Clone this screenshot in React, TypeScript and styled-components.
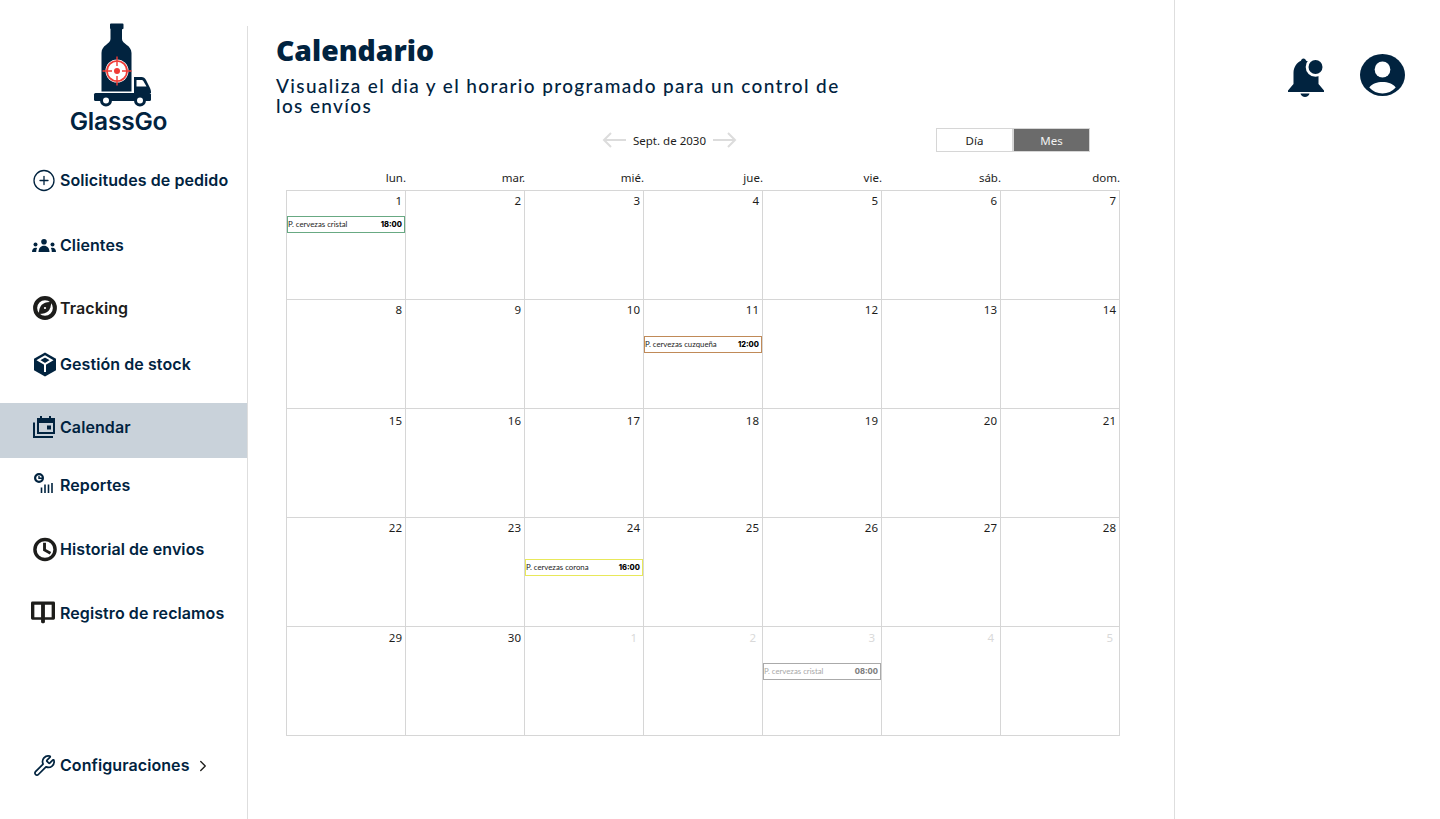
import { ReactNode } from 'react';
import styled, { createGlobalStyle } from 'styled-components';
import { ChevronRight, CirclePlus, Wrench } from 'lucide-react';

const NAVY = '#01233f';
const INK = '#1d1d1b';
const LINE = '#d6d6d6';

const GlobalStyle = createGlobalStyle`
  html, body { margin: 0; padding: 0; background: #fff; }
  body { font-family: 'Inter', 'Liberation Sans', sans-serif; color: ${NAVY}; overflow: hidden; }
  * { box-sizing: border-box; }
`;

const LogoSvg = styled.svg`
  flex: none;
  margin-left: 8px;
`;

function LogoMark() {
  return (
    <LogoSvg width="60" height="84" viewBox="0 0 60 84">
      <path
        d="M17 1.500a1 1 0 0 1 1-1h11.500a1 1 0 0 1 1 1v3.500a1 1 0 0 1-1.500 1v10c0 5 9.500 6 9.500 14v38.500h-30v-38.500c0-8 9-9 9-14v-10a1 1 0 0 1-.5-1z"
        fill={NAVY}
      />
      <path d="M41 54h7.500c2 0 3.500 1 4.500 3l4 8c.6 1.200 1 2.500 1 4v1h-17z" fill={NAVY} />
      <path d="M43.500 57v6.500h10l-3-5.200c-.5-.9-1.300-1.300-2.300-1.300z" fill="#fff" />
      <rect x="1" y="70" width="57" height="8" rx="1.500" fill={NAVY} />
      <g fill="#fff" stroke={NAVY} strokeWidth="3">
        <circle cx="13" cy="77.500" r="4.500" />
        <circle cx="47" cy="77.500" r="4.500" />
      </g>
      <circle cx="24" cy="48" r="11.500" fill="#fff" />
      <circle cx="24" cy="48" r="10" fill="none" stroke="#ef3b36" strokeWidth="1.700" />
      <circle cx="24" cy="48" r="3" fill="#ef3b36" />
      <path d="M24 33.500v9.500M24 53v9.500M9.500 48h9.500M29 48h9.500" stroke="#ef3b36" strokeWidth="1.400" />
    </LogoSvg>
  );
}

function PeopleIcon() {
  return (
    <svg width="24" height="13" viewBox="0 0 24 13">
      <g fill={NAVY}>
        <circle cx="12" cy="2.800" r="2.800" />
        <path d="M6.500 13c0-4 2.300-6.300 5.500-6.300s5.500 2.300 5.500 6.300z" />
        <circle cx="3.500" cy="5.500" r="2" />
        <path d="M0 13c0-2.500 1.300-4.300 3.500-4.300 .6 0 1.200.1 1.600.4-.6 1.100-.9 2.400-.9 3.900z" />
        <circle cx="20.500" cy="5.500" r="2" />
        <path d="M24 13c0-2.500-1.300-4.300-3.500-4.300-.6 0-1.200.1-1.600.4 .6 1.100.9 2.400.9 3.900z" />
      </g>
    </svg>
  );
}

function CompassIcon() {
  return (
    <svg width="26" height="26" viewBox="0 0 26 26">
      <circle cx="13" cy="13" r="10.700" fill="#fff" stroke={INK} strokeWidth="4.400" />
      <path d="M19.500 6.500c.4 4.500-1 7.500-2.800 9.700-2.200 1.900-5.500 3.300-10.200 3.300-.3-4.700 1.100-7.800 3-10 2.300-2.100 5.300-3.300 10-3z" fill={INK} />
      <circle cx="13" cy="13" r="1.200" fill="#fff" />
    </svg>
  );
}

function CubeIcon() {
  return (
    <svg width="24" height="25" viewBox="0 0 24 25">
      <path d="M12 .5l11 6.300v11.400l-11 6.300-11-6.300V6.800z" fill={NAVY} />
      <path d="M5.500 8.200l6.500-3.700 6.500 3.700-6.500 3.800zM12 12v8" fill="none" stroke="#fff" strokeWidth="2" />
    </svg>
  );
}

function StackedCalendarIcon() {
  return (
    <svg width="24" height="24" viewBox="0 0 24 24">
      <path d="M1 7.500v14.500h19" fill="none" stroke={NAVY} strokeWidth="2" />
      <path d="M7 1h2v2h7v-2h2v2h4v16h-18v-16h3z" fill={NAVY} />
      <rect x="6" y="8" width="14" height="9" fill="#c9d2da" />
      <rect x="14" y="10.500" width="4" height="4" fill={NAVY} />
    </svg>
  );
}

function ReportsIcon() {
  return (
    <svg width="20" height="24" viewBox="0 0 20 24">
      <circle cx="5" cy="5" r="3.900" fill="none" stroke={NAVY} strokeWidth="2.200" />
      <path d="M5 3v2.200h3" fill="none" stroke={NAVY} strokeWidth="1.400" />
      <path d="M7.500 14.500v5.500M11 11.500v8.500M14.500 11.500v8.500M18 10v10" fill="none" stroke={NAVY} strokeWidth="1.600" />
    </svg>
  );
}

function ClockIcon() {
  return (
    <svg width="25" height="25" viewBox="0 0 25 25">
      <circle cx="12.500" cy="12.500" r="10.500" fill="#fff" stroke={INK} strokeWidth="3.600" />
      <path d="M12 5.500v7.500l6.200 3.500" fill="none" stroke={INK} strokeWidth="3" />
    </svg>
  );
}

function BookIcon() {
  return (
    <svg width="25" height="24" viewBox="0 0 25 24">
      <path d="M1.500 0h22a1.500 1.500 0 0 1 1.500 1.500v16a1.500 1.500 0 0 1-1.500 1.500h-9v3l-2 1-2-1v-3h-9a1.500 1.500 0 0 1-1.500-1.500v-16a1.500 1.500 0 0 1 1.500-1.500z" fill={INK} />
      <path d="M3.500 3.500h7v13h-7zM14.500 3.500h7v13h-7z" fill="#fff" />
    </svg>
  );
}

function ArrowIcon({ flip }: { flip?: boolean }) {
  return (
    <svg width="25" height="16" viewBox="0 0 25 16" style={flip ? { transform: 'scaleX(-1)' } : undefined}>
      <path d="M24 8H2M9 1L2 8l7 7" fill="none" stroke="#dcdcdc" strokeWidth="2" />
    </svg>
  );
}

function BellIcon() {
  return (
    <svg width="38" height="40" viewBox="0 0 38 40">
      <path
        d="M15.500.5c1.400 0 2.400 1 2.600 2.300C25 4.500 30.500 10 30.500 18v8l5.500 6.500V34H0v-1.500l5.500-6.500V15C5.500 9 9 4.500 13 2.800c.2-1.300 1.100-2.300 2.500-2.300z"
        fill={NAVY}
      />
      <circle cx="27.500" cy="9" r="9.800" fill="#fff" />
      <circle cx="27.500" cy="9" r="7" fill={NAVY} />
      <path d="M12.500 35.500h9c-.5 2-2.400 3.500-4.500 3.500s-4-1.500-4.500-3.500z" fill={NAVY} />
    </svg>
  );
}

function UserIcon() {
  return (
    <svg width="45" height="42" viewBox="0 0 46 42" preserveAspectRatio="none">
      <ellipse cx="23" cy="21" rx="23" ry="21" fill={NAVY} />
      <circle cx="23" cy="15.500" r="8" fill="#fff" />
      <path d="M9.500 33.500c3-4 8-5.500 13.500-5.500s10.500 1.500 13.500 5.500c-3.500 3.800-8.200 6-13.500 6s-10-2.200-13.500-6z" fill="#fff" />
    </svg>
  );
}

const Page = styled.div`
  display: flex;
  width: 1440px;
  height: 819px;
`;

const Sidebar = styled.aside`
  display: flex;
  flex-direction: column;
  flex: none;
  width: 247px;
  padding-bottom: 26px;
`;

const SideRule = styled.div`
  flex: none;
  width: 1px;
  margin-top: 26px;
  background: #dedede;
`;

const Brand = styled.div`
  display: flex;
  flex-direction: column;
  align-items: center;
  height: 152px;
  padding: 23px 10px 0 0;
`;

const BrandName = styled.div`
  margin-top: -1px;
  font-size: 24.5px;
  font-weight: 600;
  line-height: 30px;
  letter-spacing: -0.2px;
`;

const NavItem = styled.div<{ $gap?: number; $active?: boolean; $dark?: boolean }>`
  display: flex;
  align-items: center;
  gap: 4px;
  flex: none;
  height: ${({ $active }) => ($active ? 55 : 56)}px;
  margin-top: ${({ $gap }) => $gap ?? 0}px;
  padding: 0 0 ${({ $active }) => ($active ? 7 : 0)}px 32px;
  background: ${({ $active }) => ($active ? '#c9d2da' : 'transparent')};
  color: ${({ $dark }) => ($dark ? INK : NAVY)};
  font-size: 16px;
  font-weight: 600;
  letter-spacing: 0.08px;
`;

const NavIcon = styled.span<{ $shift?: number }>`
  display: flex;
  justify-content: center;
  flex: none;
  width: 24px;
  margin: 0 ${({ $shift }) => -($shift ?? 0)}px 0 ${({ $shift }) => $shift ?? 0}px;
`;

const ConfigItem = styled(NavItem)`
  margin-top: auto;
`;

const ChevronSlot = styled.span`
  display: flex;
  margin-top: 2px;
  color: ${INK};
`;

const Main = styled.main`
  display: flex;
  flex-direction: column;
  flex: none;
  width: 926px;
  padding: 0 0 0 28px;
`;

const Title = styled.h1`
  margin: 32px 0 0;
  font-family: 'Open Sans', sans-serif;
  font-size: 28.3px;
  font-weight: 800;
  line-height: 36px;
`;

const Subtitle = styled.p`
  width: 575px;
  margin: 8px 0 0;
  font-family: 'Lato', sans-serif;
  font-size: 19px;
  font-weight: 500;
  line-height: 20px;
  letter-spacing: 1.37px;
`;

const Toolbar = styled.div`
  display: flex;
  align-items: center;
  height: 24px;
  margin-top: 12px;
`;

const MonthNav = styled.div`
  display: flex;
  align-items: center;
  gap: 6px;
  margin-left: 326px;
  width: 334px;
  font-family: 'Noto Sans', sans-serif;
  font-size: 11.5px;
  color: ${INK};
`;

const ViewButton = styled.div<{ $on?: boolean }>`
  display: flex;
  align-items: center;
  justify-content: center;
  width: 77px;
  height: 24px;
  border: 1px solid ${LINE};
  background: ${({ $on }) => ($on ? '#6b6b6b' : '#fff')};
  color: ${({ $on }) => ($on ? '#f2f2f2' : INK)};
  font-family: 'Noto Sans', sans-serif;
  font-size: 11.5px;
`;

const Calendar = styled.div`
  width: 835px;
  margin: 17px 0 0 10px;
`;

const Weekdays = styled.div`
  display: grid;
  grid-template-columns: repeat(7, 119px);
  padding-left: 1px;
`;

const Weekday = styled.div`
  height: 21px;
  font-family: 'Noto Sans', sans-serif;
  font-size: 11.5px;
  line-height: 18px;
  text-align: right;
  color: ${INK};
`;

const Grid = styled.div`
  display: grid;
  grid-template-columns: repeat(7, 119px);
  grid-auto-rows: 109px;
  width: 834px;
  border-top: 1px solid ${LINE};
  border-left: 1px solid ${LINE};
`;

const Cell = styled.div`
  border-right: 1px solid ${LINE};
  border-bottom: 1px solid ${LINE};
  min-width: 0;
`;

const DayNumber = styled.div<{ $muted?: boolean; $top: number }>`
  height: 16px;
  margin-top: ${({ $top }) => $top}px;
  padding-right: ${({ $muted }) => ($muted ? 6 : 3)}px;
  font-family: 'Noto Sans', sans-serif;
  font-size: 11.5px;
  line-height: 16px;
  text-align: right;
  color: ${({ $muted }) => ($muted ? '#d9d9d9' : INK)};
`;

const Event = styled.div<{ $color: string; $top: number; $muted?: boolean }>`
  display: flex;
  align-items: center;
  justify-content: space-between;
  height: 17px;
  margin-top: ${({ $top }) => $top}px;
  padding: 0 2px 1px 0;
  border: 1px solid ${({ $color }) => $color};
  color: ${({ $muted }) => ($muted ? '#a8a8a8' : INK)};
  font-family: 'Lato', sans-serif;
  font-size: 7.8px;
`;

const EventTime = styled.b<{ $muted?: boolean }>`
  font-family: 'Inter', sans-serif;
  font-size: 7.5px;
  font-weight: 800;
  color: ${({ $muted }) => ($muted ? '#808080' : '#000')};
`;

const Aside = styled.aside`
  display: flex;
  justify-content: flex-end;
  align-items: flex-start;
  gap: 34px;
  flex: 1;
  height: 100%;
  padding: 54px 35px 0 0;
  border-left: 1px solid #dedede;
`;

const BellSlot = styled.div`
  margin-top: 4px;
`;

interface NavEntry {
  label: string;
  icon: ReactNode;
  gap?: number;
  active?: boolean;
  dark?: boolean;
  shift?: number;
}

const NAV: NavEntry[] = [
  { label: 'Solicitudes de pedido', icon: <CirclePlus size={25} strokeWidth={1.300} /> },
  { label: 'Clientes', icon: <PeopleIcon />, gap: 9 },
  { label: 'Tracking', icon: <CompassIcon />, gap: 7, dark: true, shift: 1 },
  { label: 'Gestión de stock', icon: <CubeIcon />, shift: 1 },
  { label: 'Calendar', icon: <StackedCalendarIcon />, gap: 11, active: true, shift: 1 },
  { label: 'Reportes', icon: <ReportsIcon />, gap: -1 },
  { label: 'Historial de envios', icon: <ClockIcon />, gap: 8, shift: 1 },
  { label: 'Registro de reclamos', icon: <BookIcon />, gap: 8, shift: -1 },
];

const WEEKDAYS = ['lun.', 'mar.', 'mié.', 'jue.', 'vie.', 'sáb.', 'dom.'];

// vertical offset of the day number, one per week row
const NUMBER_TOP = [2, 2, 4, 2, 3];

interface CalEvent {
  name: string;
  time: string;
  color: string;
  top: number;
  muted?: boolean;
}

const EVENTS: Record<number, CalEvent> = {
  0: { name: 'P. cervezas cristal', time: '18:00', color: '#68a983', top: 7 },
  10: { name: 'P. cervezas cuzqueña', time: '12:00', color: '#c08a58', top: 18 },
  23: { name: 'P. cervezas corona', time: '16:00', color: '#e8e85a', top: 23 },
  32: { name: 'P. cervezas cristal', time: '08:00', color: '#aaaaaa', top: 17, muted: true },
};

const DAYS = Array.from({ length: 35 }, (_, i) => (i < 30 ? i + 1 : i - 29));

export default function App() {
  return (
    <Page>
      <GlobalStyle />
      <Sidebar>
        <Brand>
          <LogoMark />
          <BrandName>GlassGo</BrandName>
        </Brand>
        {NAV.map((item) => (
          <NavItem key={item.label} $gap={item.gap} $active={item.active} $dark={item.dark}>
            <NavIcon $shift={item.shift}>{item.icon}</NavIcon>
            {item.label}
          </NavItem>
        ))}
        <ConfigItem>
          <NavIcon>
            <Wrench size={23} strokeWidth={1.800} />
          </NavIcon>
          Configuraciones
          <ChevronSlot>
            <ChevronRight size={18} strokeWidth={1.800} />
          </ChevronSlot>
        </ConfigItem>
      </Sidebar>
      <SideRule />
      <Main>
        <Title>Calendario</Title>
        <Subtitle>Visualiza el dia y el horario programado para un control de los envíos</Subtitle>
        <Toolbar>
          <MonthNav>
            <ArrowIcon />
            Sept. de 2030
            <ArrowIcon flip />
          </MonthNav>
          <ViewButton>Día</ViewButton>
          <ViewButton $on>Mes</ViewButton>
        </Toolbar>
        <Calendar>
          <Weekdays>
            {WEEKDAYS.map((day) => (
              <Weekday key={day}>{day}</Weekday>
            ))}
          </Weekdays>
          <Grid>
            {DAYS.map((day, i) => {
              const event = EVENTS[i];
              const muted = i >= 30;
              return (
                <Cell key={i}>
                  <DayNumber $top={NUMBER_TOP[Math.floor(i / 7)]} $muted={muted}>
                    {day}
                  </DayNumber>
                  {event && (
                    <Event $color={event.color} $top={event.top} $muted={event.muted}>
                      {event.name}
                      <EventTime $muted={event.muted}>{event.time}</EventTime>
                    </Event>
                  )}
                </Cell>
              );
            })}
          </Grid>
        </Calendar>
      </Main>
      <Aside>
        <BellSlot>
          <BellIcon />
        </BellSlot>
        <UserIcon />
      </Aside>
    </Page>
  );
}
